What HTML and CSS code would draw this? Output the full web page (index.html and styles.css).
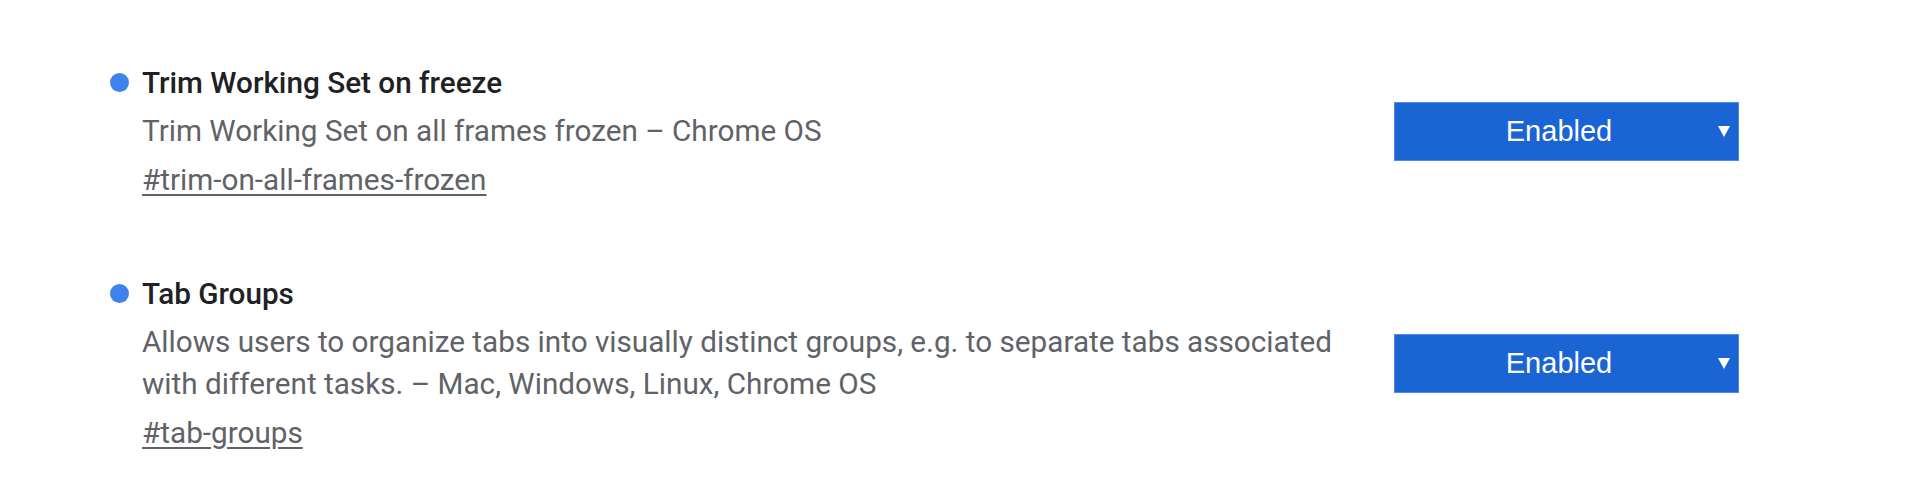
FILE: index.html
```html
<!DOCTYPE html>
<html lang="en">
<head>
<meta charset="utf-8">
<title>Flags</title>
<link rel="stylesheet" href="styles.css">
</head>
<body>
<div class="experiments">
  <div class="experiment">
    <div class="experiment-text">
      <div class="experiment-name modified">Trim Working Set on freeze</div>
      <p class="experiment-desc">Trim Working Set on all frames frozen – Chrome OS</p>
      <a class="permalink" href="#trim-on-all-frames-frozen">#trim-on-all-frames-frozen</a>
    </div>
    <div class="experiment-action">
      <div class="dropdown">
        <span class="dropdown-label">Enabled</span>
        <svg class="dropdown-arrow" width="12" height="11" viewBox="0 0 12 11"><polygon points="0,0 12,0 6,11" fill="#ffffff"/></svg>
      </div>
    </div>
  </div>
  <div class="experiment">
    <div class="experiment-text">
      <div class="experiment-name modified">Tab Groups</div>
      <p class="experiment-desc">Allows users to organize tabs into visually distinct groups, e.g. to separate tabs associated with different tasks. – Mac, Windows, Linux, Chrome OS</p>
      <a class="permalink" href="#tab-groups">#tab-groups</a>
    </div>
    <div class="experiment-action">
      <div class="dropdown">
        <span class="dropdown-label">Enabled</span>
        <svg class="dropdown-arrow" width="12" height="11" viewBox="0 0 12 11"><polygon points="0,0 12,0 6,11" fill="#ffffff"/></svg>
      </div>
    </div>
  </div>
</div>
</body>
</html>
```

FILE: styles.css
```css
html, body {
  margin: 0;
  padding: 0;
  background: #ffffff;
}

body {
  font-family: Roboto, "Liberation Sans", sans-serif;
  width: 1920px;
  height: 492px;
  overflow: hidden;
}

.experiments {
  padding: 62px 0 0 142px;
  display: flex;
  flex-direction: column;
  gap: 72px;
}

.experiment {
  display: flex;
  align-items: center;
}

.experiment-text {
  width: 1205px;
  display: flex;
  flex-direction: column;
  align-items: flex-start;
}

.experiment-name {
  position: relative;
  font-size: 29.7px;
  font-weight: 500;
  line-height: 42px;
  color: #202124;
}

.experiment-name.modified::before {
  content: "";
  position: absolute;
  left: -32px;
  top: 11px;
  width: 19px;
  height: 19px;
  border-radius: 50%;
  background: #3f82ee;
}

.experiment-desc {
  margin: 6px 0 0;
  font-size: 29.7px;
  line-height: 42px;
  color: #5f6368;
}

.permalink {
  margin-top: 7px;
  font-size: 29.7px;
  line-height: 42px;
  color: #5f6368;
  text-decoration: underline;
  text-underline-offset: 4px;
}

.experiment-action {
  margin-left: 47px;
}

.dropdown {
  box-sizing: border-box;
  width: 345px;
  height: 59px;
  background: #1a64d4;
  border: 1px solid #4d8ae3;
  display: flex;
  align-items: center;
  padding-left: 5px;
}

.dropdown-label {
  flex: 1;
  text-align: center;
  font-family: "Liberation Sans", Arial, sans-serif;
  font-size: 29px;
  color: #ffffff;
}

.dropdown-arrow {
  margin-right: 8px;
  flex: none;
}
```
